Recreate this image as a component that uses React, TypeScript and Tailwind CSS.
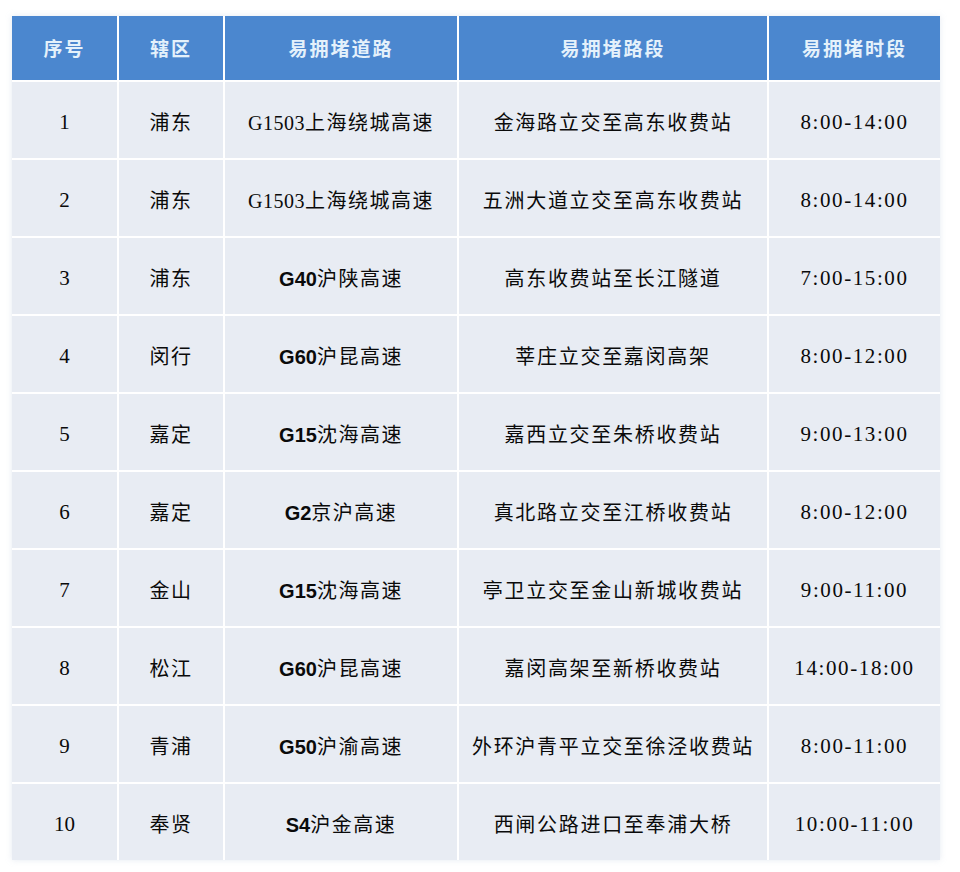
const rows: [string, string, [string, string, boolean], string, string][] = [
  ['1', '浦东', ['G1503', '上海绕城高速', false], '金海路立交至高东收费站', '8:00-14:00'],
  ['2', '浦东', ['G1503', '上海绕城高速', false], '五洲大道立交至高东收费站', '8:00-14:00'],
  ['3', '浦东', ['G40', '沪陕高速', true], '高东收费站至长江隧道', '7:00-15:00'],
  ['4', '闵行', ['G60', '沪昆高速', true], '莘庄立交至嘉闵高架', '8:00-12:00'],
  ['5', '嘉定', ['G15', '沈海高速', true], '嘉西立交至朱桥收费站', '9:00-13:00'],
  ['6', '嘉定', ['G2', '京沪高速', true], '真北路立交至江桥收费站', '8:00-12:00'],
  ['7', '金山', ['G15', '沈海高速', true], '亭卫立交至金山新城收费站', '9:00-11:00'],
  ['8', '松江', ['G60', '沪昆高速', true], '嘉闵高架至新桥收费站', '14:00-18:00'],
  ['9', '青浦', ['G50', '沪渝高速', true], '外环沪青平立交至徐泾收费站', '8:00-11:00'],
  ['10', '奉贤', ['S4', '沪金高速', true], '西闸公路进口至奉浦大桥', '10:00-11:00'],
];

const heads = ['序号', '辖区', '易拥堵道路', '易拥堵路段', '易拥堵时段'];

const cell =
  "flex h-[76px] items-center justify-center bg-[#e8ecf3] pt-[5px] text-[20px] text-[#0a0a0a] font-['Liberation_Serif','Noto_Sans_CJK_SC',serif]";

export default function App() {
  return (
    <div className="min-h-[872px] w-[960px] bg-white pt-4 pl-3">
      <div className="grid w-[928px] grid-cols-[105px_104px_232px_308px_171px] gap-[2px] bg-white shadow-[0_0_6px_rgba(180,195,215,0.35)]">
        {heads.map((h) => (
          <div key={h} className="flex h-16 items-center justify-center bg-[#4b87cf] font-['Noto_Sans_CJK_SC',sans-serif] text-[19px] font-bold tracking-[2px] text-[#e4f1fb]">
            {h}
          </div>
        ))}
        {rows.map(([n, area, road, seg, time]) => (
          <div key={n} className="contents">
            <div className={`${cell} text-[21px]`}>{n}</div>
            <div className={`${cell} tracking-[1.5px]`}>{area}</div>
            <div className={`${cell} tracking-[1.5px]`}>
              <span className={road[2] ? "font-['Liberation_Sans',sans-serif] font-bold tracking-normal" : 'tracking-[0.5px]'}>{road[0]}</span>
              <span>{road[1]}</span>
            </div>
            <div className={`${cell} tracking-[1.7px]`}>{seg}</div>
            <div className={`${cell} text-[21px] tracking-[1.6px]`}>{time}</div>
          </div>
        ))}
      </div>
    </div>
  );
}
